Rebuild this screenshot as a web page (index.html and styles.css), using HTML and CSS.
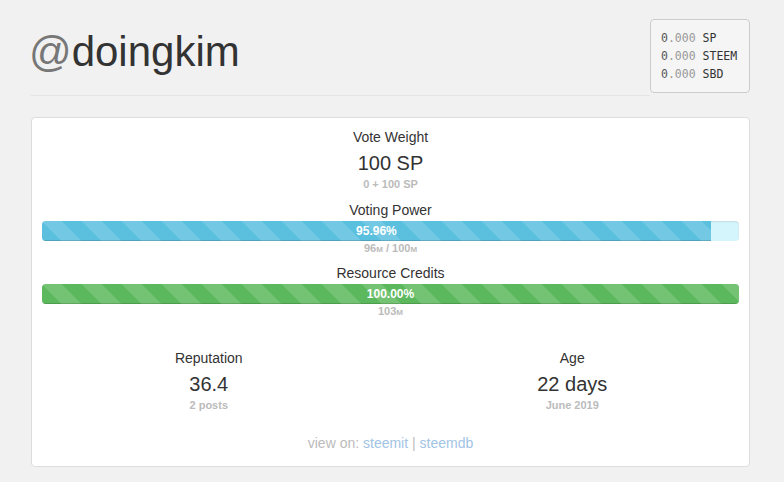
FILE: index.html
```html
<!DOCTYPE html>
<html lang="en">

<head>
  <meta charset="UTF-8">
  <title>@doingkim</title>
  <meta name="viewport" content="width=device-width, initial-scale=1.0">
  <link rel="stylesheet" href="styles.css">
</head>

<body>

  <div class="container">
    <div class="page-header">
      <h1 class="username"><span class="at">@</span>doingkim</h1>
      <div class="wallet">
        <div><span class="int">0</span><span class="dec">.000</span> SP</div>
        <div><span class="int">0</span><span class="dec">.000</span> STEEM</div>
        <div><span class="int">0</span><span class="dec">.000</span> SBD</div>
      </div>
    </div>

    <div class="panel">
      <div class="stat">
        <div class="label">Vote Weight</div>
        <div class="value">100 SP</div>
        <div class="sub">0 + 100 SP</div>
      </div>

      <div class="meter">
        <div class="label">Voting Power</div>
        <div class="progress progress-vp">
          <div class="bar bar-info" style="width: 95.96%">95.96%</div>
        </div>
        <div class="sub">96<span class="unit">m</span> / 100<span class="unit">m</span></div>
      </div>

      <div class="meter">
        <div class="label">Resource Credits</div>
        <div class="progress">
          <div class="bar bar-success" style="width: 100%">100.00%</div>
        </div>
        <div class="sub">103<span class="unit">m</span></div>
      </div>

      <div class="row">
        <div class="col stat">
          <div class="label">Reputation</div>
          <div class="value">36.4</div>
          <div class="sub">2 posts</div>
        </div>
        <div class="col stat">
          <div class="label">Age</div>
          <div class="value">22 days</div>
          <div class="sub">June 2019</div>
        </div>
      </div>

      <div class="links">
        view on: <a href="#">steemit</a> | <a href="#">steemdb</a>
      </div>
    </div>
  </div>

</body>

</html>
```

FILE: styles.css
```css
* {
  box-sizing: border-box;
}

body {
  font-family: "Liberation Sans", Arial, sans-serif;
  font-size: 14px;
  line-height: 20px;
  color: #333;
  background: #f1f1f1;
  margin: 0;
}

.container {
  width: 719px;
  margin: 0 auto 0 31px;
}

.page-header {
  display: flex;
  align-items: flex-start;
  margin-top: 19px;
}

.username {
  flex: 1;
  margin: 10px 0 0;
  padding-bottom: 20px;
  border-bottom: 1px solid #e5e5e5;
  font-size: 42px;
  line-height: 46px;
  font-weight: normal;
  color: #333;
  text-indent: -2px;
}

.username .at {
  color: #777;
}

.wallet {
  width: 100px;
  padding: 9px 10px;
  background: #f5f5f5;
  border: 1px solid #ccc;
  border-radius: 4px;
  font-family: "DejaVu Sans Mono", "Liberation Mono", monospace;
  font-size: 11.5px;
  line-height: 18px;
  color: #333;
}

.wallet .int {
  color: #555;
}

.wallet .dec {
  color: #999;
}

.panel {
  margin-top: 21px;
  background: #fff;
  border: 1px solid #ddd;
  border-radius: 4px;
  padding: 9px 10px 13px;
  text-align: center;
}

.value {
  margin-top: 2px;
  font-size: 20px;
  line-height: 28px;
}

.sub {
  font-size: 11px;
  line-height: 15px;
  font-weight: bold;
  color: #bbb;
}

.unit {
  font-variant: small-caps;
}

.meter {
  margin-top: 8px;
}

.meter .sub {
  line-height: 14px;
}

.progress {
  display: flex;
  height: 20px;
  margin-top: 1px;
  border-radius: 4px;
  overflow: hidden;
  background: #f5f5f5;
  box-shadow: inset 0 1px 2px rgba(0, 0, 0, 0.1);
}

.progress-vp {
  background: #d5f5fd;
}

.bar {
  height: 100%;
  font-size: 12px;
  font-weight: bold;
  line-height: 20px;
  color: #fff;
  text-align: center;
  box-shadow: inset 0 -1px 0 rgba(0, 0, 0, 0.15);
  background-image: linear-gradient(45deg, rgba(255, 255, 255, 0.15) 25%, transparent 25%, transparent 50%, rgba(255, 255, 255, 0.15) 50%, rgba(255, 255, 255, 0.15) 75%, transparent 75%, transparent);
  background-size: 40px 40px;
}

.bar-info {
  background-color: #5bc0de;
}

.bar-success {
  background-color: #5cb85c;
}

.row {
  display: flex;
  margin: 30px -15px 0;
}

.col {
  flex: 1;
  padding: 0 15px;
}

.links {
  margin-top: 20px;
  color: #bbb;
}

.links a {
  color: #a2c4e4;
  text-decoration: none;
}
```
